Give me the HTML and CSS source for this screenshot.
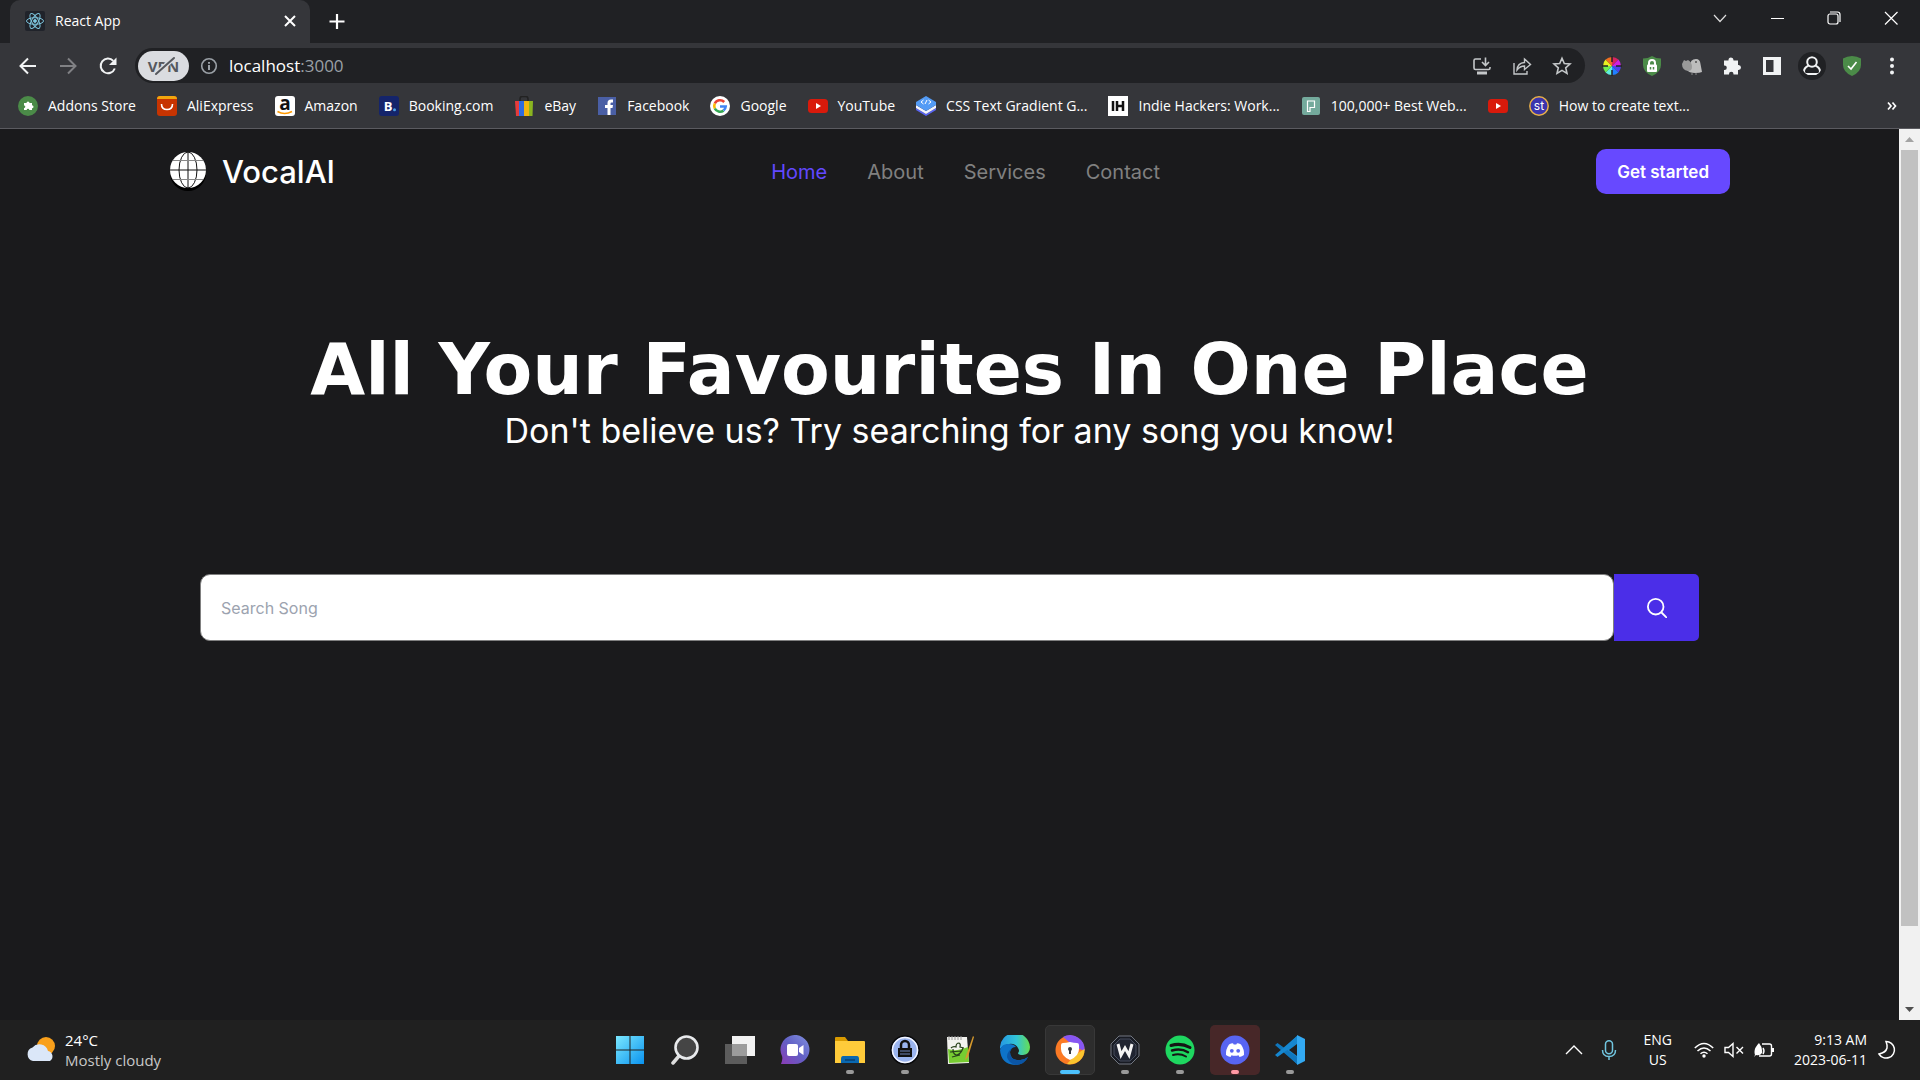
FILE: index.html
```html
<!DOCTYPE html>
<html lang="en">
<head>
    <meta charset="UTF-8" />
    <meta name="viewport" content="width=device-width, initial-scale=1.0" />
    <title>React App</title>
    <link rel="stylesheet" href="styles.css">
</head>
<body>
    <!-- Tab strip -->
    <div class="tab-strip">
        <div class="tab">
            <svg class="icon20" viewBox="0 0 20 20" fill="none" stroke="#7cc4dc" stroke-width="1"><rect width="20" height="20" rx="2" fill="#20232a" stroke="none"/><ellipse cx="10" cy="10" rx="8.5" ry="3.3"/><ellipse cx="10" cy="10" rx="8.5" ry="3.3" transform="rotate(60 10 10)"/><ellipse cx="10" cy="10" rx="8.5" ry="3.3" transform="rotate(120 10 10)"/><circle cx="10" cy="10" r="1.4" fill="#7cc4dc"/></svg>
            <span class="tab-title">React App</span>
            <button class="tab-close" aria-label="Close tab"><svg class="icon20" viewBox="0 0 20 20" stroke="#fff" stroke-width="2"><path d="M5 5l10 10M15 5L5 15"/></svg></button>
        </div>
        <button class="new-tab" aria-label="New tab"><svg class="icon20" viewBox="0 0 20 20" stroke="#fff" stroke-width="2.2"><path d="M10 3v15M2.500 10.500h15"/></svg></button>
        <div class="window-controls">
            <button aria-label="Search tabs"><svg class="icon20" viewBox="0 0 20 20" fill="none" stroke="#ddd" stroke-width="1.2"><path d="M4 7l6 6.500L16 7"/></svg></button>
            <button aria-label="Minimize"><svg class="icon20" viewBox="0 0 20 20" stroke="#fff" stroke-width="1"><path d="M4 10.500h13"/></svg></button>
            <button aria-label="Restore"><svg class="icon20" viewBox="0 0 20 20" fill="none" stroke="#fff" stroke-width="1.2"><rect x="4" y="6" width="10" height="10" rx="2"/><path d="M6 4h7.500q2.500 0 2.500 2.500V14"/></svg></button>
            <button aria-label="Close"><svg class="icon20" viewBox="0 0 20 20" stroke="#fff" stroke-width="1.2"><path d="M4 4l12.500 12.500M16.500 4L4 16.500"/></svg></button>
        </div>
    </div>

    <!-- Toolbar -->
    <div class="toolbar">
        <button aria-label="Back"><svg class="icon20" viewBox="0 0 20 20" fill="none" stroke="#f1f3f4" stroke-width="2"><path d="M18 10H3M10 2.500L2.500 10l7.500 7.500"/></svg></button>
        <button aria-label="Forward"><svg class="icon20" viewBox="0 0 20 20" fill="none" stroke="#808184" stroke-width="2"><path d="M2 10h15M10 2.500l7.500 7.500-7.500 7.500"/></svg></button>
        <button aria-label="Reload"><svg class="icon20" viewBox="0 0 20 20" fill="none" stroke="#f1f3f4" stroke-width="2"><path d="M16.800 12.500A7.300 7.300 0 1 1 15.300 4.900"/><path d="M18.500 1.500v7.500H11z" fill="#f1f3f4" stroke="none"/></svg></button>
        <div class="omnibox">
            <button class="vpn" aria-label="VPN off">VPN<svg class="vpn-slash" viewBox="0 0 30 20" stroke-linecap="round"><path d="M7 18L25 2" stroke="#dadce0" stroke-width="5"/><path d="M7 18L25 2" stroke="#55585d" stroke-width="2"/></svg></button>
            <svg class="icon20" viewBox="0 0 20 20" fill="none" stroke="#9aa0a6" stroke-width="1.600"><circle cx="10" cy="10" r="7.300"/><path d="M10 9v5M10 6v1.800" stroke-width="2"/></svg>
            <div class="url">localhost<span>:3000</span></div>
            <div class="omnibox-actions">
                <button aria-label="Install"><svg class="icon20" viewBox="0 0 20 20" fill="none" stroke="#c4c7c9" stroke-width="1.600"><path d="M9 3H3.500Q2 3 2 4.500V12q0 1.500 1.500 1.500h13Q18 13.500 18 12v-1"/><path d="M13.500 1.500V9M10 6l3.500 3.500L17 6"/><path d="M5 17h10" stroke-width="3"/></svg></button>
                <button aria-label="Share"><svg class="icon20" viewBox="0 0 20 20" fill="none" stroke="#c4c7c9" stroke-width="1.400"><path d="M2 7v11h13v-3"/><path d="M5 14q.500-7 7.500-7.500V3L18.500 8.500 12.500 13.500V10Q8 10 5 14z"/></svg></button>
                <button aria-label="Bookmark"><svg class="icon20" viewBox="0 0 20 20" fill="none" stroke="#c4c7c9" stroke-width="1.600"><path d="M10 2.200l2.300 5.300 5.700.500-4.300 3.800 1.300 5.600-5-3-5 3 1.300-5.600L2 8l5.700-.500z"/></svg></button>
            </div>
        </div>
        <button aria-label="Color picker"><svg class="icon20" viewBox="0 0 20 20"><path d="M10 10V1A9 9 0 0 1 16.400 3.600z" fill="#d6245f"/><path d="M10 10l6.400-6.400A9 9 0 0 1 19 10z" fill="#d020e0"/><path d="M10 10h9a9 9 0 0 1-2.600 6.400z" fill="#5040f0"/><path d="M10 10l6.400 6.400A9 9 0 0 1 10 19z" fill="#2080ff"/><path d="M10 10v9a9 9 0 0 1-6.400-2.600z" fill="#60eedd"/><path d="M10 10l-6.400 6.400A9 9 0 0 1 1 10z" fill="#70ee50"/><path d="M10 10H1a9 9 0 0 1 2.600-6.400z" fill="#e8f020"/><path d="M10 10L3.600 3.600A9 9 0 0 1 10 1z" fill="#f07020"/><path d="M10 0v6M10 14v6M0 10h6M14 10h6" stroke="#222" stroke-width="1.500"/></svg></button>
        <button aria-label="Privacy"><svg class="icon20" viewBox="0 0 20 20"><path d="M10 0q4 2.500 9 2.500V9q0 7-9 11Q1 16 1 9V2.500Q6 2.500 10 0z" fill="#4b8b48"/><path d="M7 9V7a3 3 0 0 1 6 0v2" fill="none" stroke="#fff" stroke-width="2"/><rect x="5" y="8.500" width="10" height="7.500" rx="1" fill="#fff"/><path d="M8.500 11v2.500M11.500 11v2.500" stroke="#4b8b48" stroke-width="1.500"/></svg></button>
        <button aria-label="Bird"><svg class="icon20" viewBox="0 0 20 20"><path d="M8 10Q8 3 14 3q4 0 4.500 5l1.500 8q-2 1-7 1-6 0-8-3z" fill="#bdbdbd"/><path d="M0 8l1-2 1-2 2 1 2-1q4 2 4 7 0 4-4 4Q0 14 0 8z" fill="#999"/><circle cx="14" cy="6" r="1" fill="#555"/><path d="M10 17v2M14 17v2" stroke="#888"/></svg></button>
        <button aria-label="Extensions"><svg class="icon20" viewBox="0 0 20 20" fill="#f1f3f4"><path d="M2 4.500h4.500V4a2.500 2.500 0 0 1 5 0v.500H16V9h.500a2.500 2.500 0 0 1 0 5H16v4.500h-4.500V18a2.200 2.200 0 0 0-4.500 0v.500H2V14h.500a2.300 2.300 0 0 0 0-4.600H2z"/></svg></button>
        <button aria-label="Side panel"><svg class="icon20" viewBox="0 0 20 20"><rect x="1" y="1" width="18" height="18" fill="#f1f3f4"/><rect x="4" y="4" width="7.500" height="12" fill="#35363a"/></svg></button>
        <button class="profile" aria-label="Profile"><svg class="icon20" viewBox="0 0 20 20" fill="none" stroke="#f1f3f4" stroke-width="2"><circle cx="10" cy="6" r="4.800"/><path d="M6.500 9.800Q2 11.500 2 15.500 2 18 4.500 18h11q2.500 0 2.500-2.500 0-4-4.500-5.700"/></svg></button>
        <button aria-label="Protected"><svg class="icon20" viewBox="0 0 20 20"><path d="M1 2.500Q5 0 10 0t9 2.500V9q0 7-9 11Q1 16 1 9z" fill="#4b8b48"/><path d="M6 10l3 3 5.500-7" fill="none" stroke="#fff" stroke-width="1.600"/></svg></button>
        <button aria-label="Menu"><svg class="icon20" viewBox="0 0 20 20" fill="#f1f3f4"><circle cx="10" cy="3.500" r="2"/><circle cx="10" cy="10" r="2"/><circle cx="10" cy="16.500" r="2"/></svg></button>
    </div>

    <!-- Bookmarks -->
    <div class="bookmarks">
        <a href="#"><svg class="icon20" viewBox="0 0 20 20"><circle cx="10" cy="10" r="10" fill="#4b8b48"/><path d="M6 7h2.500a1.500 1.500 0 1 1 3 0H14v2.300a1.500 1.500 0 1 1 0 3V14h-2.700a1.300 1.300 0 0 0-2.600 0H6v-2a1.300 1.300 0 0 0 0-2.600z" fill="#fff"/></svg>Addons Store</a>
        <a href="#"><svg class="icon20" viewBox="0 0 20 20"><rect width="20" height="20" rx="3" fill="#c73401"/><path d="M0 3q0-3 3-3h14q3 0 3 3z" fill="#f2a60d"/><path d="M4.500 8q0 5.500 5.500 5.500T15.500 8" fill="none" stroke="#fff" stroke-width="1.600"/></svg>AliExpress</a>
        <a href="#"><svg class="icon20" viewBox="0 0 20 20"><rect width="20" height="20" rx="3" fill="#fff"/><text class="logo-a" x="10" y="14">a</text><path d="M2.500 15.500q7 4 14.500 0" fill="none" stroke="#f90" stroke-width="1.600"/></svg>Amazon</a>
        <a href="#"><svg class="icon20" viewBox="0 0 20 20"><rect width="20" height="20" rx="3" fill="#14246b"/><text class="logo-b" x="9" y="15">B</text><circle cx="15.500" cy="13.700" r="1.500" fill="#4ba3e8"/></svg>Booking.com</a>
        <a href="#"><svg class="icon20" viewBox="0 0 20 20"><path d="M6 5V3q0-2.500 2-2.500h4q2 0 2 2.500v2" fill="none" stroke="#222" stroke-width="1.500"/><path d="M1 5h5v15H2z" fill="#e53b3b"/><path d="M5 5h5v15H5z" fill="#2f6be0"/><path d="M10 5h5v15h-5z" fill="#f2b50f"/><path d="M15 5h4l-.500 15H15z" fill="#8ab520"/></svg>eBay</a>
        <a href="#"><svg class="icon20" viewBox="0 0 20 20"><rect x="1" y="1" width="18" height="18" fill="#4a5fa5"/><path d="M10.500 19v-7H8V9h2.500V7q0-3.500 3.500-3.500h2v3h-1.500q-1 0-1 1V9H16l-.500 3h-2v7z" fill="#fff"/></svg>Facebook</a>
        <a href="#"><svg class="icon20" viewBox="0 0 20 20" fill="none" stroke-width="2.600"><circle cx="10" cy="10" r="10" fill="#fff"/><path d="M14.200 6A5.800 5.800 0 0 0 4.800 7.500" stroke="#ea4335"/><path d="M4.800 7.500a5.800 5.800 0 0 0 0 5" stroke="#fbbc05"/><path d="M4.800 12.500a5.800 5.800 0 0 0 8.700 2.100" stroke="#34a853"/><path d="M13.500 14.600a5.800 5.800 0 0 0 2.200-4.100H10" stroke="#4285f4"/></svg>Google</a>
        <a href="#"><svg class="icon20" viewBox="0 0 20 20"><rect y="3" width="20" height="14" rx="3.500" fill="#d91a0b"/><path d="M8 7l5 3-5 3z" fill="#fff"/></svg>YouTube</a>
        <a href="#"><svg class="icon20" viewBox="0 0 20 20"><path d="M0 12l10 6 10-6v2l-10 6-10-6z" fill="#5864f5"/><path d="M0 9l10 6 10-6v3l-10 6-10-6z" fill="#f2f4ff"/><path d="M10 0l10 6v3l-10 6-10-6V6z" fill="#539bf5"/><path d="M7.500 4L5 6l2.500 2M12.500 4L15 6l-2.500 2M11 4L9 8" fill="none" stroke="#fff"/></svg>CSS Text Gradient G...</a>
        <a href="#"><svg class="icon20" viewBox="0 0 20 20"><rect width="20" height="20" fill="#fff"/><path d="M5 5v10M9 5v10M15 5v10M9 10h6" stroke="#111" stroke-width="2.500"/></svg>Indie Hackers: Work...</a>
        <a href="#"><svg class="icon20" viewBox="0 0 20 20"><rect x="1" y="1" width="18" height="18" rx="2" fill="#74aa9c"/><path d="M6.500 15.500V5h7v6.500H9v4z" fill="none" stroke="#fff" stroke-width="1.200"/></svg>100,000+ Best Web...</a>
        <a href="#" aria-label="YouTube video"><svg class="icon20" viewBox="0 0 20 20"><rect y="3" width="20" height="14" rx="3.500" fill="#d91a0b"/><path d="M8 7l5 3-5 3z" fill="#fff"/></svg></a>
        <a href="#"><svg class="icon20" viewBox="0 0 20 20"><circle cx="10" cy="10" r="9.200" fill="#3b35ad" stroke="#e8b04a" stroke-width="1.500"/><text class="logo-st" x="10" y="14">st</text></svg>How to create text...</a>
        <button class="more" aria-label="More bookmarks"><svg class="icon20" viewBox="0 0 20 20" fill="none" stroke="#fff" stroke-width="1.700"><path d="M6 6.500l3 3.500-3 3.500M10.500 6.500l3 3.500-3 3.500"/></svg></button>
    </div>

    <!-- Page -->
    <div class="viewport">
        <div class="page">
            <header class="header">
                <a class="brand" href="#">
                    <svg class="brand-logo" viewBox="0 0 36 40" fill="none" stroke="#111" stroke-width="1"><circle cx="18" cy="21" r="18" fill="#000" stroke="none"/><circle cx="18" cy="18" r="18" fill="#fff" stroke="none"/><path d="M18 0v36M0 18h36"/><ellipse cx="18" cy="18" rx="9" ry="18"/><path d="M3 8.500h30M3 27.500h30" stroke="#888"/></svg>
                    VocalAI
                </a>
                <nav class="nav">
                    <a class="active" href="#">Home</a>
                    <a href="#">About</a>
                    <a href="#">Services</a>
                    <a href="#">Contact</a>
                </nav>
                <button class="get-started">Get started</button>
            </header>
            <main class="hero">
                <h1>All Your Favourites In One Place</h1>
                <p>Don't believe us? Try searching for any song you know!</p>
                <form class="search">
                    <input type="search" placeholder="Search Song" aria-label="Search Song" />
                    <button type="submit" aria-label="Search"><svg class="icon20" viewBox="0 0 20 20" fill="none" stroke="#fff" stroke-width="1.800"><circle cx="8.700" cy="8.700" r="7.800"/><path d="M14.500 14.500L20 20"/></svg></button>
                </form>
            </main>
        </div>
        <div class="scrollbar">
            <svg viewBox="0 0 21 21"><path d="M6 13l4.500-5 4.500 5z" fill="#a3a3a3"/></svg>
            <div class="track"><div class="thumb"></div></div>
            <svg viewBox="0 0 21 21"><path d="M6 8l4.500 5L15 8z" fill="#505050"/></svg>
        </div>
    </div>

    <!-- Taskbar -->
    <div class="taskbar">
        <div class="weather">
            <svg viewBox="0 0 32 32"><circle cx="21" cy="12" r="9" fill="#f9a01b"/><path d="M8 27a7 7 0 0 1-.500-13.500A9 9 0 0 1 23 17a5.500 5.500 0 0 1 2 10z" fill="#dbe7f8"/></svg>
            <div>24°C<br><span>Mostly cloudy</span></div>
        </div>
        <div class="apps">
            <button aria-label="Start"><svg viewBox="0 0 30 30"><defs><linearGradient id="win" x1="0" y1="0" x2="1" y2="1"><stop offset="0" stop-color="#7be8ff"/><stop offset="1" stop-color="#0a93ef"/></linearGradient></defs><path d="M1 1h13.500v13.500H1zM15.500 1H29v13.500H15.500zM1 15.500h13.500V29H1zM15.500 15.500H29V29H15.500z" fill="url(#win)"/></svg></button>
            <button aria-label="Search"><svg viewBox="0 0 30 30"><path d="M9 21l-6 7" stroke="#ddd" stroke-width="3.500" stroke-linecap="round"/><circle cx="16.500" cy="12.500" r="11" fill="#454545" stroke="#e8eaec" stroke-width="2.600"/></svg></button>
            <button aria-label="Task view"><svg viewBox="0 0 30 30"><rect x="0" y="9" width="22" height="20" fill="#5c5c5c"/><rect x="7" y="1" width="23" height="20" fill="#f2f2f2"/><path d="M7 9h15v12H7z" fill="#9c9c9c"/></svg></button>
            <button aria-label="Chat"><svg viewBox="0 0 30 30"><defs><linearGradient id="chat" x1="0" y1="1" x2="1" y2="0"><stop offset="0" stop-color="#8b3bb5"/><stop offset=".5" stop-color="#6160c5"/><stop offset="1" stop-color="#8192df"/></linearGradient></defs><path d="M1 29q2-5 1-8A14.500 14.500 0 1 1 15 29z" fill="url(#chat)"/><rect x="7" y="9" width="11" height="12" rx="2" fill="#fff"/><path d="M19 13l4.500-3v10L19 17z" fill="#fff"/></svg></button>
            <button class="running" aria-label="File Explorer"><svg viewBox="0 0 30 30"><path d="M0 3q0-1 1-1h9l3 4v6H0z" fill="#d99a00"/><path d="M0 6h29q1 0 1 1v21H0z" fill="#ffcb3a"/><path d="M6 28v-4q0-3 2-3h14q2 0 2 3v4z" fill="#0a68b0"/><path d="M10 25h10" stroke="#083f70" stroke-width="1.500"/></svg></button>
            <button class="running" aria-label="KeePass"><svg viewBox="0 0 30 30"><circle cx="15" cy="15" r="14" fill="#7a9de8" stroke="#080808" stroke-width="1.500"/><circle cx="15" cy="15" r="12.500" fill="#9ab4ef" stroke="#f4f6ff" stroke-width="1.500"/><path d="M11 14v-4a4 4 0 0 1 8 0v4" fill="none" stroke="#111" stroke-width="2.500"/><path d="M8 13h14v9H8z" fill="#111"/><path d="M10 16h10M10 19h10" stroke="#6f84b8"/></svg></button>
            <button aria-label="Notepad++"><svg viewBox="0 0 30 30"><path d="M2 2h20l2 26-21 1z" fill="#f3f3ef"/><path d="M3 14q8 3 20-2l1 15-20 1z" fill="#77cc32"/><path d="M4 1v4M7 1v4M10 1v4M13 1v4M16 1v4" stroke="#999"/><path d="M6 13q2-2 5-1 0-4 3-4 2 1 1 4l4 1M5 17l11-1M8 14q0 6 4 6 4-1 6-7M7 22l8-2" fill="none" stroke="#27401a" stroke-width="1.200"/><path d="M28 1l-7 20-1 4 3-3 6-20z" fill="#d79a2c"/></svg></button>
            <button aria-label="Edge"><svg viewBox="0 0 30 30"><defs><linearGradient id="edge" x1="0" x2="1"><stop offset="0" stop-color="#2597e4"/><stop offset=".55" stop-color="#32c4d6"/><stop offset="1" stop-color="#66de52"/></linearGradient></defs><path d="M0 14A15 15 0 0 1 30 12q0 7-7 8-5 0-5-2 2-2 0-5Q15 8 9 9T0 14z" fill="url(#edge)"/><path d="M0 15q2-7 9-6 5 0 7 3-5 0-6 5 0 7 7 8 6 1 11-3-4 8-13 8Q1 29 0 15z" fill="#0e73c9"/><path d="M10 17q0 7 7 8 6 1 11-3-4 8-13 8-7-3-8-8 0-7 8-10-4 1-5 5z" fill="#0b55a5"/></svg></button>
            <button class="current" aria-label="AVG Browser"><svg viewBox="0 0 30 30"><circle cx="15" cy="15" r="14.500" fill="#fb7a25"/><path d="M8 2A14.500 14.500 0 0 1 29.500 16L20 12z" fill="#8756f2"/><path d="M29.500 14A14.500 14.500 0 0 1 12 29l8-9z" fill="#fbc52e"/><path d="M15 7q4 1 7 1 2 0 2 2v4q0 7-9 11-9-4-9-11v-4q0-2 2-2 3 0 7-1z" fill="#fff"/><circle cx="15" cy="14" r="2" fill="#363940"/><path d="M14 14h2v5h-2z" fill="#363940"/></svg></button>
            <button class="running" aria-label="WeMod"><svg viewBox="0 0 30 30"><path d="M9 1h12l8 8v12l-8 8H9l-8-8V9z" fill="#181b23" stroke="#727781"/><path d="M10 4h10l6 6v10l-6 6H10l-6-6V10z" fill="#202431" stroke="#444b5b"/><path d="M8 9l3 11 4-7 4 7 3-11" fill="none" stroke="#f4f4f4" stroke-width="3"/></svg></button>
            <button class="running" aria-label="Spotify"><svg viewBox="0 0 30 30" fill="none" stroke="#151515" stroke-linecap="round"><circle cx="15" cy="15" r="14.500" fill="#1ed760" stroke="none"/><path d="M6 10.500q10-3 19 2" stroke-width="3"/><path d="M7 15.500q9-2.500 16 1.700" stroke-width="2.500"/><path d="M8 20q7-2 13 1.500" stroke-width="2"/></svg></button>
            <button class="alert" aria-label="Discord"><svg viewBox="0 0 30 30"><circle cx="15" cy="15" r="14.500" fill="#5865f2"/><path d="M9 9.500q2-1.200 4-1.300l.700 1.300h2.600l.700-1.300q2 .1 4 1.300 3.500 5 3 10.500-2 1.700-4.500 2l-1-1.700q-3.500 1-7 0l-1 1.700Q8 21.700 6 20q-.500-5.500 3-10.500z" fill="#fff"/><circle cx="11.800" cy="15.800" r="1.900" fill="#5865f2"/><circle cx="18.200" cy="15.800" r="1.900" fill="#5865f2"/></svg></button>
            <button class="running" aria-label="VS Code"><svg viewBox="0 0 30 30"><path d="M22 1L7 15 22 29v-8l-8-6 8-6z" fill="#1687d0"/><path d="M0 10l2.500-2L22 22v7z" fill="#1077bd"/><path d="M0 20l2.500 2L22 8V1z" fill="#1687d0"/><path d="M22 0l8 4v22l-8 4z" fill="#33a9f2"/></svg></button>
        </div>
        <div class="tray">
            <button aria-label="Hidden icons"><svg class="icon20" viewBox="0 0 20 20" fill="none" stroke="#fff" stroke-width="1.400"><path d="M2 14l8-8 8 8"/></svg></button>
            <button class="mic" aria-label="Microphone"><svg class="icon20" viewBox="0 0 20 20" fill="none" stroke="#71c5df" stroke-width="1.500"><rect x="6.500" y=".8" width="7" height="13" rx="3.500"/><path d="M3.500 10q0 6.500 6.500 6.500t6.500-6.500M10 16.500V20"/></svg></button>
            <div class="lang">ENG<br>US</div>
            <div class="status">
                <svg class="icon20" viewBox="0 0 20 20" fill="none" stroke="#fff" stroke-width="1.500"><path d="M.8 8q9.200-9 18.400 0M3.500 11q6.500-6 13 0M6.500 13.800q3.500-3 7 0"/><circle cx="10" cy="16" r="1.700" fill="#fff" stroke="none"/></svg>
                <svg class="icon20" viewBox="0 0 20 20" fill="none" stroke="#fff" stroke-width="1.400"><path d="M1 7.500h3.500L9 3.500v13l-4.500-4H1zM12.500 7l6.500 6.500M19 7l-6.500 6.500"/></svg>
                <svg class="icon20" viewBox="0 0 20 20" fill="none" stroke="#fff" stroke-width="1.400"><path d="M8 4h7.500q2 0 2 2v8q0 2-2 2H5"/><path d="M19 8v4" stroke-width="2"/><path d="M0 17l1-2q-2-6 4-12 4 5 3 10-2 3-6 2z" fill="#fff" stroke="none"/><path d="M9 8q2 3 0 6"/></svg>
            </div>
            <div class="clock">9:13 AM<br>2023-06-11</div>
            <svg class="icon20" viewBox="0 0 20 20" fill="none" stroke="#fff" stroke-width="1.500"><path d="M9 1.500a8.300 8.300 0 1 1-7 12.500q7-1.500 8-6 .500-3-1-6.500z"/></svg>
        </div>
    </div>
</body>
</html>
```
FILE: styles.css
```css
* {
    box-sizing: border-box;
}
body {
    margin: 0;
    height: 100vh;
    display: flex;
    flex-direction: column;
    overflow: hidden;
    background-color: #1a1a1c;
    color: white;
    font-family: "Open Sans", "Noto Sans", sans-serif;
    font-size: 14px;
}
button {
    display: flex;
    align-items: center;
    justify-content: center;
    padding: 0;
    border: none;
    background: none;
    color: inherit;
    font-family: inherit;
    cursor: pointer;
}
a {
    color: inherit;
    text-decoration: none;
}
svg {
    display: block;
    flex-shrink: 0;
}
.icon20 {
    width: 20px;
    height: 20px;
}

/* Tab strip */
.tab-strip {
    display: flex;
    align-items: flex-start;
    height: 43px;
    padding-left: 10px;
    background-color: #202124;
}
.tab {
    display: flex;
    align-items: center;
    gap: 10px;
    width: 300px;
    height: 43px;
    padding: 0 10px 2px 15px;
    border-radius: 10px 10px 0 0;
    background-color: #35363a;
}
.tab-title {
    flex: 1;
}
.new-tab {
    width: 54px;
    height: 41px;
}
.window-controls {
    display: flex;
    margin-left: auto;
    padding-right: 1px;
}
.window-controls button {
    width: 57px;
    height: 36px;
}

/* Toolbar */
.toolbar {
    display: flex;
    align-items: center;
    height: 45px;
    padding: 0 8px;
    background-color: #35363a;
}
.toolbar > button {
    width: 40px;
    height: 36px;
}
.omnibox {
    flex: 1;
    display: flex;
    align-items: center;
    gap: 10px;
    height: 35px;
    margin: 0 7px;
    padding: 0 3px;
    border-radius: 18px;
    background-color: #202124;
}
.vpn {
    position: relative;
    width: 51px;
    height: 30px;
    border-radius: 15px;
    background-color: #dadce0;
    color: #55585d;
    font-size: 15px;
    font-weight: bold;
}
.vpn-slash {
    position: absolute;
    width: 30px;
    height: 20px;
}
.url {
    flex: 1;
    font-size: 17px;
}
.url span {
    color: #9aa0a6;
}
.omnibox-actions {
    display: flex;
}
.omnibox-actions button {
    width: 40px;
    height: 35px;
}
.toolbar > .profile svg {
    width: 28px;
    height: 28px;
    padding: 4px;
    border-radius: 50%;
    background-color: #202124;
}

/* Bookmarks */
.bookmarks {
    display: flex;
    align-items: center;
    gap: 21px;
    height: 41px;
    padding: 0 18px 5px;
    border-bottom: 1px solid #5b5b60;
    background-color: #35363a;
    white-space: nowrap;
}
.bookmarks a {
    display: flex;
    align-items: center;
    gap: 10px;
}
.more {
    margin-left: auto;
}
.logo-a {
    fill: #111;
    font: bold 19px "Open Sans", sans-serif;
    text-anchor: middle;
}
.logo-b {
    fill: white;
    font: bold 13px "Open Sans", sans-serif;
    text-anchor: middle;
}
.logo-st {
    fill: white;
    font: 12px Inter, sans-serif;
    text-anchor: middle;
}

/* Page */
.viewport {
    flex: 1;
    display: flex;
    min-height: 0;
    font-family: Inter, sans-serif;
}
.page {
    flex: 1;
}
.header {
    display: flex;
    align-items: center;
    justify-content: space-between;
    padding: 20px 169px 0 170px;
}
.brand {
    display: flex;
    align-items: center;
    gap: 16px;
    font-size: 31px;
    font-weight: 500;
    line-height: 40px;
}
.brand-logo {
    width: 36px;
    height: 40px;
}
.nav {
    display: flex;
    gap: 40px;
    color: #808080;
    font-size: 20px;
}
.nav .active {
    color: #6248ff;
}
.get-started {
    height: 45px;
    padding: 0 21px;
    border-radius: 10px;
    background-color: #6749ff;
    font-size: 17px;
    font-weight: 600;
}
.hero {
    padding: 140px 200px 0;
    text-align: center;
}
h1 {
    margin: 0;
    font-family: "DejaVu Sans", sans-serif;
    font-size: 71px;
    font-weight: bold;
    line-height: 72px;
    white-space: nowrap;
}
.hero p {
    margin: 5px 0 123px;
    font-size: 34px;
    line-height: 40px;
}
.search {
    display: flex;
}
.search input {
    flex: 1;
    height: 67px;
    padding: 0 20px;
    border: 1px solid #808080;
    border-radius: 10px;
    background-color: white;
    font-family: inherit;
    font-size: 16px;
}
.search input::placeholder {
    color: #9ca3af;
}
.search button {
    width: 85px;
    height: 67px;
    border-radius: 0 5px 5px 0;
    background-color: #4b2ee8;
}

.scrollbar {
    display: flex;
    flex-direction: column;
    width: 21px;
    background-color: #f1f1f1;
}
.track {
    flex: 1;
    padding: 0 2px;
}
.thumb {
    height: 91.4%;
    background-color: #c1c1c1;
}

/* Taskbar */
.taskbar {
    display: grid;
    grid-template-columns: 1fr auto 1fr;
    align-items: center;
    height: 60px;
    background-color: #202020;
    line-height: 20px;
}
.weather {
    display: flex;
    align-items: center;
    gap: 8px;
    padding-left: 25px;
    font-size: 15px;
}
.weather svg {
    width: 32px;
    height: 32px;
}
.weather span {
    color: #c8c8c8;
}
.apps {
    display: flex;
    gap: 5px;
}
.apps button {
    position: relative;
    width: 50px;
    height: 50px;
    border-radius: 5px;
}
.apps svg {
    width: 30px;
    height: 30px;
}
.apps .current {
    border: 1px solid #383838;
    background-color: #2d2d2d;
}
.apps .alert {
    background-color: #472728;
}
.running::after,
.current::after,
.alert::after {
    content: "";
    position: absolute;
    bottom: 1px;
    width: 8px;
    height: 4px;
    border-radius: 2px;
    background-color: #9a9a9a;
}
.current::after {
    bottom: 0;
    width: 20px;
    background-color: #4cc2ff;
}
.alert::after {
    background-color: #ff99a4;
}
.tray {
    display: flex;
    align-items: center;
    justify-content: flex-end;
    padding-right: 23px;
}
.mic {
    margin: 0 24px 0 15px;
}
.lang {
    text-align: center;
}
.status {
    display: flex;
    gap: 10px;
    margin: 0 20px 0 22px;
}
.clock {
    margin-right: 10px;
    text-align: right;
}
```
